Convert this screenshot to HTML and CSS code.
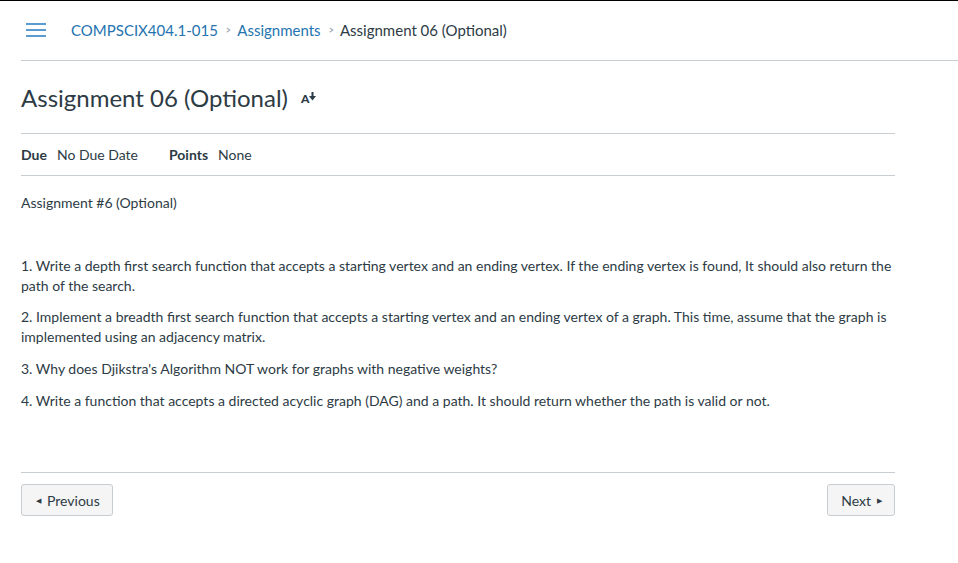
FILE: index.html
```html
<!DOCTYPE html>
<html lang="en">
<head>
<meta charset="utf-8">
<title>Assignment 06 (Optional)</title>
<link rel="stylesheet" href="styles.css">
</head>
<body>
<div class="topbar"></div>
<header class="header">
  <button class="hamburger" aria-label="Menu">
    <svg width="20" height="14" viewBox="0 0 20 14"><rect x="0" y="0" width="20" height="2" fill="#5b9bd0"/><rect x="0" y="6" width="20" height="2" fill="#5b9bd0"/><rect x="0" y="12" width="20" height="2" fill="#5b9bd0"/></svg>
  </button>
  <nav class="crumbs">
    <a class="crumb-link" href="#">COMPSCIX404.1-015</a>
    <span class="sep">&gt;</span>
    <a class="crumb-link" href="#">Assignments</a>
    <span class="sep">&gt;</span>
    <span class="crumb-current">Assignment 06 (Optional)</span>
  </nav>
</header>
<main class="content">
  <div class="title-row">
    <h1 class="title">Assignment 06 (Optional)</h1>
    <span class="reader-icon"><span class="reader-a">A</span><svg width="7" height="9" viewBox="0 0 7 9"><rect x="2.5" y="0" width="2" height="4.5" fill="#2d3b45"/><polygon points="0,4 7,4 3.5,8.5" fill="#2d3b45"/></svg></span>
  </div>
  <div class="details">
    <span class="label">Due</span><span class="value">No Due Date</span>
    <span class="label label-gap">Points</span><span class="value">None</span>
  </div>
  <div class="description">
    <p class="intro">Assignment #6 (Optional)</p>
    <p class="first">1. Write a depth first search function that accepts a starting vertex and an ending vertex. If the ending vertex is found, It should also return the path of the search.</p>
    <p>2. Implement a breadth first search function that accepts a starting vertex and an ending vertex of a graph. This time, assume that the graph is implemented using an adjacency matrix.</p>
    <p>3. Why does Djikstra's Algorithm NOT work for graphs with negative weights?</p>
    <p>4. Write a function that accepts a directed acyclic graph (DAG) and a path. It should return whether the path is valid or not.</p>
  </div>
  <div class="pager">
    <button class="btn btn-prev"><span class="tri">&#9664;</span>Previous</button>
    <button class="btn">Next<span class="tri tri-right">&#9654;</span></button>
  </div>
</main>
</body>
</html>
```
FILE: styles.css
```css
* { box-sizing: border-box; }
html, body { margin: 0; padding: 0; background: #fff; }
body {
  font-family: Lato, "Noto Sans", sans-serif;
  color: #2d3b45;
  font-size: 14px;
  line-height: 20px;
}
.topbar { height: 1px; background: #000; }
.header {
  margin-left: 21px;
  height: 60px;
  border-bottom: 1px solid #c7cdd1;
  display: flex;
  align-items: center;
  padding-left: 5px;
  padding-bottom: 1px;
}
.hamburger {
  border: 0; background: none; padding: 0; margin: 0 25px 0 0;
  display: flex; align-items: center;
}
.crumbs { display: flex; align-items: center; font-size: 15px; }
.crumb-link { color: #2573b0; text-decoration: none; }
.sep { color: #8b969e; font-size: 11px; margin: 0 6px 0 7px; transform: scaleX(0.8); }
.crumb-current { color: #2d3b45; }
.content { padding: 0 63px 0 21px; }
.title-row {
  display: flex; align-items: center;
  margin-top: 22px;
  padding-bottom: 20px;
  border-bottom: 1px solid #c7cdd1;
}
.title { margin: 0; font-size: 24px; font-weight: 400; line-height: 30px; }
.reader-icon { display: flex; align-items: flex-start; margin-left: 13px; margin-top: 1px; }
.reader-a { font-size: 12px; font-weight: 900; line-height: 12px; }
.reader-icon svg { margin-top: -1px; }
.details {
  display: flex; align-items: center;
  height: 42px;
  border-bottom: 1px solid #c7cdd1;
  font-size: 14px;
}
.label { font-weight: 700; margin-right: 10px; }
.label-gap { margin-left: 31px; }
.description { padding-top: 17px; padding-bottom: 49px; border-bottom: 1px solid #c7cdd1; }
.description p { margin: 0 0 12px; }
.description .intro { margin-bottom: 43px; }
.description .first { margin-bottom: 11px; }
.pager { display: flex; justify-content: space-between; padding-top: 11px; }
.btn {
  font-family: Lato, "Noto Sans", sans-serif;
  font-size: 14px;
  color: #2d3b45;
  background: #f5f5f5;
  border: 1px solid #c7cdd1;
  border-radius: 3px;
  height: 32px;
  padding: 0 12px 0 13px;
  display: flex; align-items: center;
}
.btn-prev { padding-left: 14px; }
.tri { font-size: 7px; margin-right: 6px; }
.tri-right { margin: 0 0 0 6px; }
```
